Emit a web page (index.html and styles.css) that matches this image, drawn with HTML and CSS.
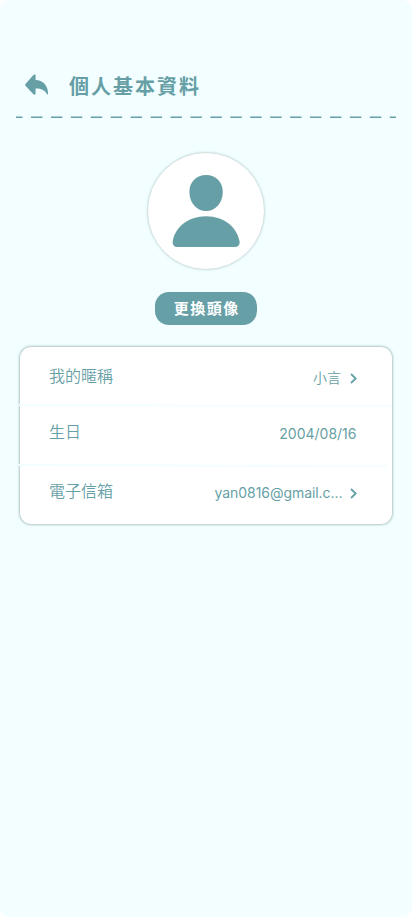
FILE: index.html
```html
<!DOCTYPE html>
<html lang="zh-Hant">
<head>
<meta charset="utf-8">
<meta name="viewport" content="width=device-width, initial-scale=1">
<title>個人基本資料</title>
<link rel="stylesheet" href="styles.css">
</head>
<body>
<main class="screen">
  <header class="header">
    <svg class="back" width="24" height="22" viewBox="0 -.3 24 22"><path d="M10.6 1.3V5.7C17.8 6 23 11.2 23 19C23 20.4 22.6 20.5 21.9 19.6C19.3 15.6 16 14.2 10.6 14.3V19C10.6 20.4 9.3 20.9 8.2 19.8L.7 11.7C.1 11 .1 10.1 .7 9.4L8.2 .9C9.3-.2 10.6 .3 10.6 1.3Z"/></svg>
    <h1 class="title">個人基本資料</h1>
  </header>
  <svg class="divider" width="380" height="2" viewBox="0 0 380 2"><path d="M0 1.25H380"/></svg>
  <div class="avatar">
    <svg width="68" height="73" viewBox="-.4 0 68 73"><path d="M33.7 0C43.5 0 50.4 6.8 50.4 17C50.4 28.5 42.6 36.1 33.7 36.1C24.8 36.1 17 28.5 17 17C17 6.8 23.9 0 33.7 0ZM33.7 41.2C52 41.2 64.6 52.5 67.1 66C67.8 69.5 66 72 62.5 72H5C1.5 72-.3 69.5 .4 66C2.8 52.5 15.4 41.2 33.7 41.2Z"/></svg>
  </div>
  <button class="change">更換頭像</button>
  <section class="card">
    <div class="row row-name">
      <span class="label">我的暱稱</span>
      <span class="value">小言</span>
      <svg class="chevron" width="7" height="11" viewBox="0 0 7 11"><path d="M1 1L5.7 5.5L1 10"/></svg>
    </div>
    <svg class="rule" width="376" height="3" viewBox="0 0 376 3"><path d="M1 1L374 2"/></svg>
    <div class="row row-birthday">
      <span class="label">生日</span>
      <span class="value date">2004/08/16</span>
    </div>
    <svg class="rule" width="376" height="3" viewBox="0 0 376 3"><path d="M0 1L369 2"/></svg>
    <div class="row row-mail">
      <span class="label">電子信箱</span>
      <span class="value mail">yan0816@gmail.c...</span>
      <svg class="chevron" width="7" height="11" viewBox="0 0 7 11"><path d="M1 1L5.7 5.5L1 10"/></svg>
    </div>
  </section>
</main>
</body>
</html>
```
FILE: styles.css
```css
* { box-sizing: border-box; }
body { margin: 0; background: #fff; }
.screen {
  display: flex;
  flex-direction: column;
  align-items: center;
  height: 917px;
  padding-top: 70px;
  border-radius: 10px;
  background: #f2feff;
  color: #679fa6;
  font-family: Inter, "Noto Sans CJK TC", sans-serif;
}
.header {
  display: flex;
  align-items: flex-start;
  width: 100%;
  height: 46px;
  padding: 4px 0 0 25px;
}
.back { fill: #679fa6; }
.title {
  margin: -3px 0 0 20px;
  font: 700 20px/30px "Noto Sans CJK TC", sans-serif;
  letter-spacing: 2px;
}
.divider {
  stroke: #679fa6;
  stroke-width: 1.5;
  stroke-dasharray: 11.4 8.53;
  stroke-dashoffset: 4.9;
}
.avatar {
  display: flex;
  justify-content: center;
  width: 118px;
  height: 118px;
  margin-top: 34px;
  padding-top: 22px;
  border: 1px solid #d5e2e2;
  border-radius: 50%;
  background: #fff;
  box-shadow: 0 0 2px rgba(103, 159, 166, .3);
}
.avatar svg { fill: #679fa6; }
.change {
  width: 102px;
  height: 33px;
  margin-top: 22px;
  padding: 0 0 2px 1.5px;
  border: 0;
  border-radius: 14px;
  background: #679fa6;
  color: #fff;
  font: 700 15px/31px "Noto Sans CJK TC", sans-serif;
  letter-spacing: 1.5px;
}
.card {
  align-self: flex-start;
  width: 372px;
  height: 177px;
  margin: 22px 0 0 20px;
  border-radius: 11px;
  background: #fff;
  box-shadow: 0 0 3px rgba(40, 80, 80, .65);
}
.row {
  display: flex;
  align-items: flex-start;
  padding: 0 35px 0 29px;
}
.row-name { height: 57px; padding-top: 16px; }
.row-birthday { height: 57px; padding-top: 12px; }
.row-mail { padding-top: 11px; }
.rule {
  display: block;
  margin-left: -2px;
  fill: none;
  stroke: #f2feff;
  stroke-width: 2;
}
.label {
  flex: 1;
  font: 350 16px/24px "Noto Sans CJK TC", sans-serif;
}
.value {
  margin-top: 5px;
  font-size: 14px;
  font-weight: 350;
  line-height: 20px;
}
.date { margin-right: .5px; font-weight: 400; }
.mail { margin-right: -1.5px; font-weight: 400; letter-spacing: -.05px; }
.chevron {
  margin: 10px 0 0 9px;
  fill: none;
  stroke: #679fa6;
  stroke-width: 1.8;
}
```
